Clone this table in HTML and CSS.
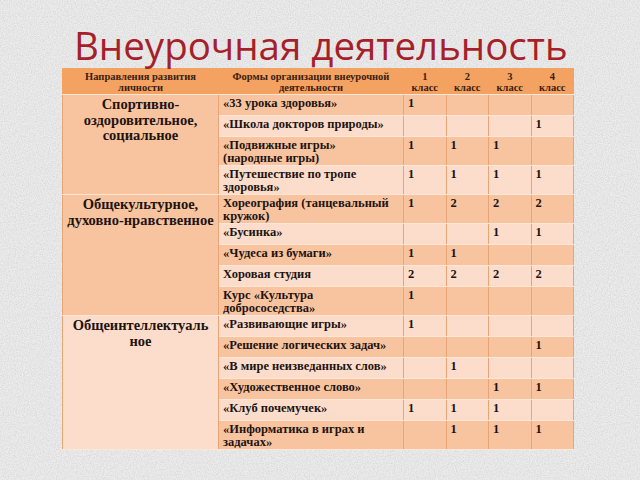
FILE: index.html
```html
<!DOCTYPE html>
<html lang="ru">
<head>
<meta charset="utf-8">
<title>Внеурочная деятельность</title>
<link rel="stylesheet" href="styles.css">
</head>
<body>
<svg class="paper" width="640" height="480" aria-hidden="true">
  <filter id="noise">
    <feTurbulence type="fractalNoise" baseFrequency="0.85" numOctaves="2" seed="4"/>
    <feColorMatrix type="matrix" values="0 0 0 0 0.55  0 0 0 0 0.55  0 0 0 0 0.55  0 0 0 -1.6 1.05"/>
  </filter>
  <rect width="640" height="480" fill="#ececec"/>
  <rect width="640" height="480" filter="url(#noise)" opacity="0.6"/>
</svg>
<main class="slide">
  <h1 class="title">Внеурочная деятельность</h1>
  <table class="grid">
    <colgroup>
      <col class="c-dir"><col class="c-form"><col class="c-n"><col class="c-n"><col class="c-n"><col class="c-n">
    </colgroup>
    <thead>
      <tr class="head">
        <th>Направления развития<br>личности</th>
        <th>Формы организации внеурочной<br>деятельности</th>
        <th>1<br>класс</th>
        <th>2<br>класс</th>
        <th>3<br>класс</th>
        <th>4<br>класс</th>
      </tr>
    </thead>
    <tbody>
      <tr class="dark">
        <td class="group dark" rowspan="4">Спортивно-<br>оздоровительное,<br>социальное</td>
        <td>«33 урока здоровья»</td><td>1</td><td></td><td></td><td></td>
      </tr>
      <tr class="light"><td>«Школа докторов природы»</td><td></td><td></td><td></td><td>1</td></tr>
      <tr class="dark"><td>«Подвижные игры»<br>(народные игры)</td><td>1</td><td>1</td><td>1</td><td></td></tr>
      <tr class="light"><td>«Путешествие по тропе<br>здоровья»</td><td>1</td><td>1</td><td>1</td><td>1</td></tr>
      <tr class="dark">
        <td class="group dark" rowspan="5">Общекультурное,<br>духовно-нравственное</td>
        <td>Хореография (танцевальный<br>кружок)</td><td>1</td><td>2</td><td>2</td><td>2</td>
      </tr>
      <tr class="light"><td>«Бусинка»</td><td></td><td></td><td>1</td><td>1</td></tr>
      <tr class="dark"><td>«Чудеса из бумаги»</td><td>1</td><td>1</td><td></td><td></td></tr>
      <tr class="light"><td>Хоровая студия</td><td>2</td><td>2</td><td>2</td><td>2</td></tr>
      <tr class="dark"><td>Курс «Культура<br>добрососедства»</td><td>1</td><td></td><td></td><td></td></tr>
      <tr class="light">
        <td class="group light" rowspan="6">Общеинтеллектуаль<br>ное</td>
        <td>«Развивающие игры»</td><td>1</td><td></td><td></td><td></td>
      </tr>
      <tr class="dark"><td>«Решение логических задач»</td><td></td><td></td><td></td><td>1</td></tr>
      <tr class="light"><td>«В мире неизведанных слов»</td><td></td><td>1</td><td></td><td></td></tr>
      <tr class="dark"><td>«Художественное слово»</td><td></td><td></td><td>1</td><td>1</td></tr>
      <tr class="light"><td>«Клуб почемучек»</td><td>1</td><td>1</td><td>1</td><td></td></tr>
      <tr class="dark"><td>«Информатика в играх и<br>задачах»</td><td></td><td>1</td><td>1</td><td>1</td></tr>
    </tbody>
  </table>
</main>
</body>
</html>
```
FILE: styles.css
```css
html, body {
  margin: 0;
  padding: 0;
  width: 640px;
  height: 480px;
  overflow: hidden;
  background: #ececec;
}

.paper {
  position: absolute;
  left: 0;
  top: 0;
  z-index: 0;
}

.slide {
  position: relative;
  z-index: 1;
  padding: 0 0 0 62px;
}

.title {
  margin: 0;
  padding: 22px 0 0 12px;
  height: 46px;
  font-family: "Open Sans", "DejaVu Sans", sans-serif;
  font-weight: 400;
  font-size: 38.5px;
  line-height: 46px;
  color: #a61f2a;
  white-space: nowrap;
}

.grid {
  border-collapse: collapse;
  table-layout: fixed;
  width: 511px;
  font-family: "Liberation Serif", "Times New Roman", serif;
  font-weight: 700;
  color: #1d1410;
}

.c-dir { width: 156px; }
.c-form { width: 185px; }
.c-n { width: 42.5px; }

.grid th,
.grid td {
  border-left: 1px solid #e7a577;
  border-right: 1px solid #e7a577;
  border-top: 1px solid #fde6d6;
  border-bottom: 1px solid #fde6d6;
  padding: 0;
}

.head {
  height: 26px;
  background: #f3a262;
}

.head th {
  font-size: 10.5px;
  line-height: 11px;
  font-weight: 700;
  color: #3a2010;
  text-align: center;
  vertical-align: middle;
  padding: 1px 1px 0;
  border-left-color: #f3a262;
  border-right-color: #f3a262;
  border-top-color: #f3a262;
  white-space: nowrap;
}

.grid tbody tr {
  height: 21px;
}

.grid td {
  font-size: 12.5px;
  line-height: 13px;
  vertical-align: top;
  padding: 2px 1px 0 4px;
  white-space: nowrap;
}

.dark { background: #f8c39f; }
.light { background: #fcdcca; }

.grid td.group {
  font-size: 14.5px;
  line-height: 15.5px;
  text-align: center;
  padding: 2px 1px 0;
}
```
